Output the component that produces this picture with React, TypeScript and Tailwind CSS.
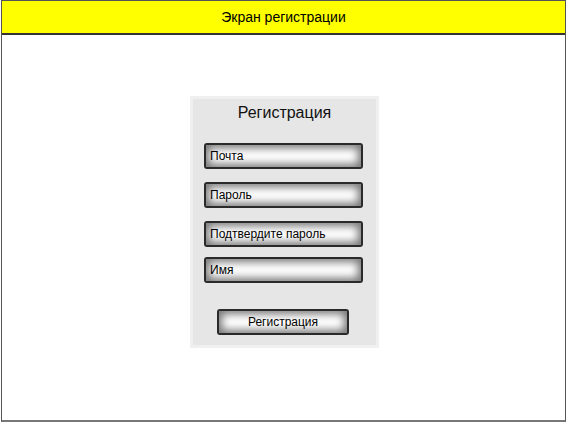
import React from "react";

const Field = ({ label, className = "" }: { label: string; className?: string }) => (
  <div
    className={`ml-[11px] h-[26px] w-[159px] rounded-[3px] border-2 border-[#2a2a2a] bg-white shadow-[inset_0_0_8px_3px_rgba(0,0,0,0.55)] flex items-center pl-[4px] text-[12px] text-black ${className}`}
  >
    {label}
  </div>
);

export default function App() {
  return (
    <div
      className="w-[567px] h-[424px] bg-white"
      style={{ fontFamily: '"Liberation Sans", Arial, sans-serif' }}
    >
      <div className="ml-[1px] w-[565px] h-[422px] border border-[#555] border-b-2 border-b-[#777] flex flex-col">
        <div className="h-[34px] bg-[#ffff00] border-b-2 border-b-[#333] flex items-center justify-center text-[14px] text-black">
          Экран регистрации
        </div>
        <div className="flex-1 flex justify-center pt-[61px]">
          <div className="ml-[2px] w-[189px] h-[252px] bg-[#e6e6e6] border-[3px] border-[#f0f0f0] flex flex-col items-start">
            <div className="self-center mt-[4px] text-[16px] text-[#111] leading-[19px]">Регистрация</div>
            <Field label="Почта" className="mt-[21px]" />
            <Field label="Пароль" className="mt-[13px]" />
            <Field label="Подтвердите пароль" className="mt-[13px]" />
            <Field label="Имя" className="mt-[10px]" />
            <div className="ml-[24px] mt-[26px] h-[26px] w-[132px] rounded-[3px] border-2 border-[#2a2a2a] bg-white shadow-[inset_0_0_8px_3px_rgba(0,0,0,0.55)] flex items-center justify-center text-[12px] text-black">
              Регистрация
            </div>
          </div>
        </div>
      </div>
    </div>
  );
}
